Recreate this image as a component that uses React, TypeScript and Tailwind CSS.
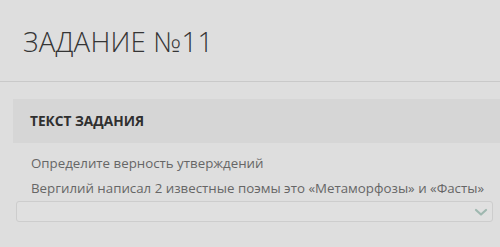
import React from "react";

export default function App() {
  return (
    <div className="w-[500px] h-[247px] overflow-hidden bg-[#dedede] flex flex-col" style={{ fontFamily: '"Open Sans", sans-serif' }}>
      <div className="h-[82px] pl-[23px] pt-[23px] border-b border-[#c9c9c9]">
        <h1 className="text-[27.6px] leading-[36px] font-light text-[#353535] tracking-[0.2px]">ЗАДАНИЕ №11</h1>
      </div>
      <div className="mt-[17px] ml-[13px] flex flex-col">
        <div className="h-[44px] bg-[#d6d6d6] pl-[17px] flex items-center">
          <span className="text-[13.7px] font-bold text-[#2f2f2f]">ТЕКСТ ЗАДАНИЯ</span>
        </div>
        <div className="pl-[18px] pt-[8px] text-[13.3px] leading-[25px] text-[#666666] whitespace-nowrap">
          <p>Определите верность утверждений</p>
          <p>Вергилий написал 2 известные поэмы это «Метаморфозы» и «Фасты»</p>
        </div>
        <div className="ml-[3px] w-[477px] h-[21px] border border-[#cdcdcd] rounded-[3px] bg-[#e0e0e0] flex items-center justify-end pr-[4px]">
          <svg width="14" height="10" viewBox="0 0 14 10">
            <path d="M2 3 L7 7.5 L12 3" fill="none" stroke="#9fb8b0" strokeWidth="2.2" strokeLinecap="round" strokeLinejoin="round" />
          </svg>
        </div>
      </div>
    </div>
  );
}
